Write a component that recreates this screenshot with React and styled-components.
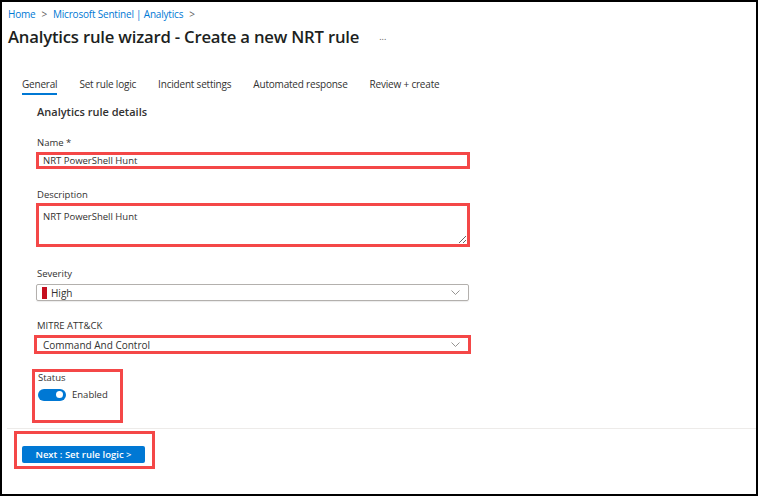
import React from 'react';
import styled, { createGlobalStyle } from 'styled-components';

const GlobalStyle = createGlobalStyle`
  html, body {
    margin: 0;
    padding: 0;
    background: #fff;
  }
  body {
    font-family: "Open Sans", "Noto Sans", Arial, sans-serif;
    color: #323130;
  }
`;

const RED = '#f44747';

const tabs = [
  'General',
  'Set rule logic',
  'Incident settings',
  'Automated response',
  'Review + create',
];

const Chevron = () => (
  <svg width="9" height="5" viewBox="0 0 9 5">
    <polyline
      points="0.5,0.5 4.5,4.5 8.5,0.5"
      fill="none"
      stroke="#8a8886"
      strokeWidth="0.9"
    />
  </svg>
);

const App = () => {
  return (
    <Frame>
      <GlobalStyle />
      <Header>
        <Breadcrumb>
          <a>Home</a>
          <span className="sep">&gt;</span>
          <a>Microsoft Sentinel | Analytics</a>
          <span className="sep">&gt;</span>
        </Breadcrumb>
        <TitleRow>
          <h1>Analytics rule wizard - Create a new NRT rule</h1>
          <span className="more">...</span>
        </TitleRow>
      </Header>

      <Tabs>
        {tabs.map((tab, idx) => (
          <Tab key={idx} $active={idx === 0}>
            {tab}
          </Tab>
        ))}
      </Tabs>

      <Form>
        <SectionTitle>Analytics rule details</SectionTitle>

        <Label $top={16}>Name *</Label>
        <TextInput readOnly value="NRT PowerShell Hunt" />

        <Label $top={19}>Description</Label>
        <TextArea readOnly value="NRT PowerShell Hunt" />

        <Label $top={20}>Severity</Label>
        <Select $top={3}>
          <span className="marker" />
          <span className="value">High</span>
          <Chevron />
        </Select>

        <Label $top={18}>MITRE ATT&amp;CK</Label>
        <Highlight $top={2} $left={-2} $width={437}>
          <Select $top={0} $plain>
            <span className="value">Command And Control</span>
            <Chevron />
          </Select>
        </Highlight>

        <StatusBox>
          <Label $top={0} $tight>Status</Label>
          <ToggleRow>
            <Toggle />
            <span>Enabled</span>
          </ToggleRow>
        </StatusBox>
      </Form>

      <Footer>
        <ButtonBox>
          <PrimaryButton>Next : Set rule logic &gt;</PrimaryButton>
        </ButtonBox>
      </Footer>
    </Frame>
  );
};

const Frame = styled.div`
  width: 758px;
  height: 496px;
  box-sizing: border-box;
  border: 2px solid #000;
  background: #fff;
  display: flex;
  flex-direction: column;
  overflow: hidden;
`;

const Header = styled.header`
  padding: 4px 0 0 6px;
`;

const Breadcrumb = styled.nav`
  display: flex;
  align-items: center;
  gap: 6px;
  height: 16px;
  font-size: 10px;
  letter-spacing: -0.2px;
  line-height: 16px;
  color: #0078d4;

  .sep {
    color: #605e5c;
    font-size: 10px;
  }
`;

const TitleRow = styled.div`
  display: flex;
  align-items: center;
  height: 26px;
  margin-top: 1px;

  h1 {
    margin: 0;
    font-size: 16.7px;
    font-weight: 600;
    color: #201f1e;
    letter-spacing: -0.2px;
  }

  .more {
    margin-left: 20px;
    font-size: 9px;
    color: #605e5c;
  }
`;

const Tabs = styled.div`
  display: flex;
  gap: 22px;
  margin-top: 27px;
  padding-left: 20px;
`;

const Tab = styled.div`
  font-size: 10px;
  letter-spacing: -0.2px;
  line-height: 16px;
  padding-bottom: 1px;
  color: #323130;
  border-bottom: 2px solid ${(p) => (p.$active ? '#0078d4' : 'transparent')};
`;

const Form = styled.div`
  display: flex;
  flex-direction: column;
  align-items: flex-start;
  padding-left: 34px;
`;

const SectionTitle = styled.h2`
  margin: 9px 0 0 1px;
  font-size: 11px;
  line-height: 16px;
  font-weight: 600;
  color: #323130;
`;

const Label = styled.label`
  display: block;
  margin-top: ${(p) => p.$top}px;
  margin-left: 1px;
  font-size: 9.5px;
  line-height: ${(p) => (p.$tight ? 12 : 14)}px;
  color: #323130;
`;

const TextInput = styled.input`
  box-sizing: border-box;
  width: 434px;
  height: 17px;
  margin: 2px 0 0;
  padding: 0 4px;
  border: 3px solid ${RED};
  outline: none;
  font-family: inherit;
  font-size: 9.5px;
  color: #323130;
  background: #fff;
`;

const TextArea = styled.textarea`
  box-sizing: border-box;
  width: 434px;
  height: 44px;
  margin: 1px 0 0;
  padding: 4px 4px;
  border: 3px solid ${RED};
  outline: none;
  resize: vertical;
  font-family: inherit;
  font-size: 9.5px;
  line-height: 14px;
  color: #323130;
  background: #fff;
`;

const Select = styled.div`
  box-sizing: border-box;
  display: flex;
  align-items: center;
  width: ${(p) => (p.$plain ? '100%' : '433px')};
  height: ${(p) => (p.$plain ? 13 : 17)}px;
  margin-top: ${(p) => p.$top}px;
  padding: 0 8px 0 ${(p) => (p.$plain ? 6 : 5)}px;
  border: ${(p) => (p.$plain ? 'none' : '1px solid #b3b0ad')};
  border-radius: 2px;
  box-shadow: ${(p) => (p.$plain ? 'none' : '0 1px 1px rgba(0,0,0,0.08)')};
  font-size: 10px;
  color: #323130;

  .marker {
    width: 5px;
    height: 12px;
    background: #c50f1f;
    margin-right: 4px;
  }

  .value {
    flex: 1;
  }
`;

const Highlight = styled.div`
  box-sizing: border-box;
  width: ${(p) => p.$width}px;
  margin-top: ${(p) => p.$top}px;
  margin-left: ${(p) => p.$left}px;
  border: 3px solid ${RED};
`;

const StatusBox = styled.div`
  box-sizing: border-box;
  width: 91px;
  height: 54px;
  margin-top: 15px;
  margin-left: -4px;
  padding-left: 2px;
  border: 3px solid ${RED};
  display: flex;
  flex-direction: column;
`;

const ToggleRow = styled.div`
  display: flex;
  align-items: center;
  gap: 6px;
  margin-top: 4px;
  margin-left: 1px;
  font-size: 9.5px;
  color: #323130;
`;

const Toggle = styled.span`
  position: relative;
  width: 28px;
  height: 12px;
  border-radius: 6px;
  background: #0078d4;

  &::after {
    content: '';
    position: absolute;
    top: 2.5px;
    right: 3px;
    width: 7px;
    height: 7px;
    border-radius: 50%;
    background: #fff;
  }
`;

const Footer = styled.footer`
  margin-top: 5px;
  margin-left: 5px;
  border-top: 1px solid #edebe9;
`;

const ButtonBox = styled.div`
  box-sizing: border-box;
  width: 141px;
  height: 38px;
  margin: 2px 0 0 7px;
  padding: 7px 0 0 5px;
  border: 3px solid ${RED};
`;

const PrimaryButton = styled.button`
  box-sizing: border-box;
  width: 123px;
  height: 17px;
  padding: 0;
  border: none;
  border-radius: 2px;
  background: #0078d4;
  color: #fff;
  font-family: inherit;
  font-size: 9.5px;
  font-weight: 600;
  cursor: pointer;
`;

export default App;
